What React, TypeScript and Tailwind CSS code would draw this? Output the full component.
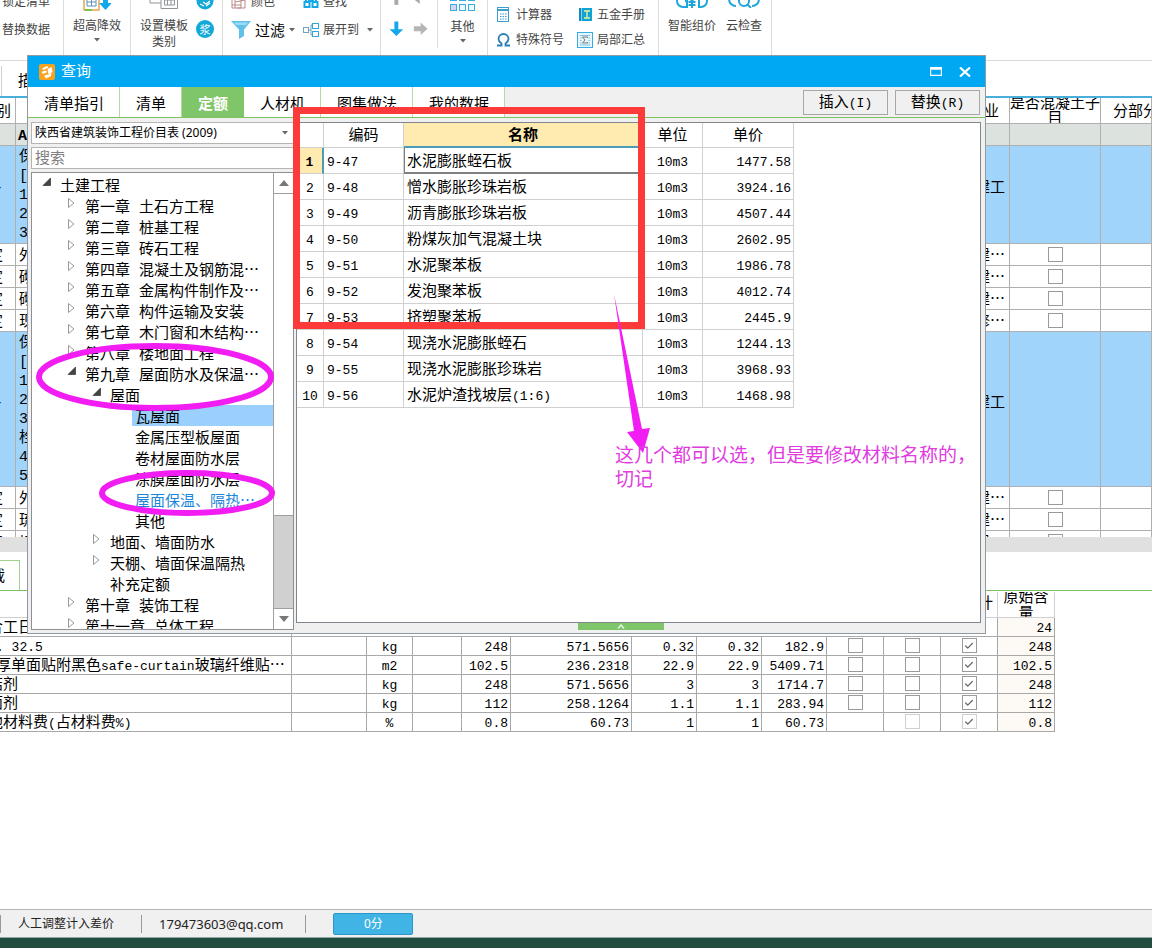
import React from 'react';
import { clsx } from 'clsx';
import { Check } from 'lucide-react';

const MONO = "font-['Liberation_Mono','Noto_Sans_CJK_SC',monospace]";
const SANS = "font-['Noto_Sans','Noto_Sans_CJK_SC',sans-serif]";

interface TreeNode {
  label: string;
  level: 0 | 1 | 2 | 3;
  state?: 'open' | 'closed';
  selected?: boolean;
  link?: boolean;
}

interface QuotaRow {
  code: string;
  name: string;
  suffix?: string;
  price: string;
}

interface MaterialRow {
  name: React.ReactNode;
  unit: string;
  values: string[];
  origin: string;
  locked?: boolean;
}

const tabs = ['清单指引', '清单', '定额', '人材机', '图集做法', '我的数据'];

const tree: TreeNode[] = [
  { label: '土建工程', level: 0, state: 'open' },
  { label: '第一章 土石方工程', level: 1, state: 'closed' },
  { label: '第二章 桩基工程', level: 1, state: 'closed' },
  { label: '第三章 砖石工程', level: 1, state: 'closed' },
  { label: '第四章 混凝土及钢筋混⋯', level: 1, state: 'closed' },
  { label: '第五章 金属构件制作及⋯', level: 1, state: 'closed' },
  { label: '第六章 构件运输及安装', level: 1, state: 'closed' },
  { label: '第七章 木门窗和木结构⋯', level: 1, state: 'closed' },
  { label: '第八章 楼地面工程', level: 1, state: 'closed' },
  { label: '第九章 屋面防水及保温⋯', level: 1, state: 'open' },
  { label: '屋面', level: 2, state: 'open' },
  { label: '瓦屋面', level: 3, selected: true },
  { label: '金属压型板屋面', level: 3 },
  { label: '卷材屋面防水层', level: 3 },
  { label: '涂膜屋面防水层', level: 3 },
  { label: '屋面保温、隔热⋯', level: 3, link: true },
  { label: '其他', level: 3 },
  { label: '地面、墙面防水', level: 2, state: 'closed' },
  { label: '天棚、墙面保温隔热', level: 2, state: 'closed' },
  { label: '补充定额', level: 2 },
  { label: '第十章 装饰工程', level: 1, state: 'closed' },
  { label: '第十一章 总体工程', level: 1, state: 'closed' },
];

const quotas: QuotaRow[] = [
  { code: '9-47', name: '水泥膨胀蛭石板', price: '1477.58' },
  { code: '9-48', name: '憎水膨胀珍珠岩板', price: '3924.16' },
  { code: '9-49', name: '沥青膨胀珍珠岩板', price: '4507.44' },
  { code: '9-50', name: '粉煤灰加气混凝土块', price: '2602.95' },
  { code: '9-51', name: '水泥聚苯板', price: '1986.78' },
  { code: '9-52', name: '发泡聚苯板', price: '4012.74' },
  { code: '9-53', name: '挤塑聚苯板', price: '2445.9' },
  { code: '9-54', name: '现浇水泥膨胀蛭石', price: '1244.13' },
  { code: '9-55', name: '现浇水泥膨胀珍珠岩', price: '3968.93' },
  { code: '9-56', name: '水泥炉渣找坡层', suffix: '(1:6)', price: '1468.98' },
];

const materials: MaterialRow[] = [
  {
    name: <span className="ml-2 text-[13px]">. 32.5</span>,
    unit: 'kg',
    values: ['248', '571.5656', '0.32', '0.32', '182.9'],
    origin: '248',
  },
  {
    name: <span className="ml-2">厚单面贴附黑色<span className="text-[13px]">safe-curtain</span>玻璃纤维贴⋯</span>,
    unit: 'm2',
    values: ['102.5', '236.2318', '22.9', '22.9', '5409.71'],
    origin: '102.5',
  },
  { name: '结剂', unit: 'kg', values: ['248', '571.5656', '3', '3', '1714.7'], origin: '248' },
  { name: '面剂', unit: 'kg', values: ['112', '258.1264', '1.1', '1.1', '283.94'], origin: '112' },
  {
    name: <>他材料费<span className="text-[13px]">(</span>占材料费<span className="text-[13px]">%)</span></>,
    unit: '%',
    values: ['0.8', '60.73', '1', '1', '60.73'],
    origin: '0.8',
    locked: true,
  },
];

function Caret({ className }: { className?: string }) {
  return (
    <svg viewBox="0 0 6 4" className={clsx('h-1 w-1.5 shrink-0', className)}>
      <path d="M0 0h6L3 3.6z" fill="#666" />
    </svg>
  );
}

function CheckBox({ label, checked = false, faded = false }: { label: string; checked?: boolean; faded?: boolean }) {
  return (
    <span className="inline-grid size-[15px] place-items-center align-middle">
      <input
        type="checkbox"
        aria-label={label}
        defaultChecked={checked}
        className={clsx(
          'col-start-1 row-start-1 size-[15px] appearance-none border bg-white',
          faded ? 'border-[#d0d0d0]' : 'border-[#9a9a9a]',
        )}
      />
      {checked && <Check className="pointer-events-none col-start-1 row-start-1 size-2.5 text-[#666]" strokeWidth={3} />}
    </span>
  );
}

function RibbonButton({ icon, children }: { icon?: React.ReactNode; children: React.ReactNode }) {
  return (
    <button type="button" className="flex h-4 items-center gap-1 whitespace-nowrap">
      {icon}
      {children}
    </button>
  );
}

function Ribbon() {
  return (
    <header className={`flex h-[61px] shrink-0 items-stretch overflow-hidden border-b border-[#d9d9d9] bg-white text-[12px] leading-4 text-[#444] ${SANS}`}>
      <div className="flex w-16 shrink-0 flex-col justify-end gap-3 border-r border-[#dcdcdc] pb-[22px] pl-0.5">
        <RibbonButton>锁定清单</RibbonButton>
        <RibbonButton>替换数据</RibbonButton>
      </div>

      <div className="flex w-[67px] shrink-0 flex-col justify-end border-r border-[#dcdcdc] pb-[18px]">
        <button type="button" className="flex flex-col items-center">
          <svg viewBox="0 0 28 20" className="mb-1.5 h-5 w-7" fill="none">
            <path d="M1 0v18h15V0" stroke="#e9a64a" strokeWidth="1.5" />
            <path d="M4 0v14h9V0M4 5h9M4 10h9M8.500 0v14" stroke="#5f93b8" />
            <path d="M2 18h7" stroke="#7dc242" strokeWidth="2" />
            <path d="M20 0h5v11h4l-6.500 7-6.500-7h4z" fill="#12a8ea" />
          </svg>
          <span>超高降效</span>
          <Caret className="mt-1" />
        </button>
      </div>

      <div className="flex w-[92px] shrink-0 items-end justify-between border-r border-[#dcdcdc] pb-2.5 pr-2 pl-[9px]">
        <button type="button" className="flex flex-col items-center">
          <svg viewBox="0 0 30 20" className="mb-2 h-5 w-[30px]" fill="none" stroke="#8f9499">
            <path d="M12 13H1V0M12 0v18.500h16.500V0M15.500 0v15h10V0M15.500 5h10M15.500 10h10M18.500 0v15M22 0v15" />
          </svg>
          <span>设置模板</span>
          <span>类别</span>
        </button>
        <div className="flex flex-col gap-2.5 pb-3">
          <svg viewBox="0 0 18 18" className="size-[18px]">
            <circle cx="9" cy="9" r="8.500" fill="#12a8d8" />
            <path d="M4 12l4 2M7 10l3 2 4-3M10 14l4-3" stroke="#fff" strokeWidth="1.300" fill="none" />
          </svg>
          <button type="button" className="grid size-[18px] place-items-center rounded-full bg-[#12a8d8] text-[11px] leading-none text-white">
            浆
          </button>
        </div>
      </div>

      <div className="flex w-[158px] shrink-0 flex-col justify-end gap-3 border-r border-[#dcdcdc] pb-[22px] pl-2">
        <div className="flex items-center">
          <div className="w-[72px]">
            <RibbonButton
              icon={
                <svg viewBox="0 0 16 16" className="size-4" fill="none" stroke="#b98a8a">
                  <path d="M1 5h9v9H1zM4 8l10-2v8H6M1 11h9M4 14V5" />
                </svg>
              }
            >
              颜色
            </RibbonButton>
          </div>
          <RibbonButton
            icon={
              <svg viewBox="0 0 16 16" className="size-4" fill="none" stroke="#12a8ea" strokeWidth="2">
                <path d="M3 8V3h3v5M10 8V3h3v5M6 7h4" />
                <rect x="1.500" y="8" width="5" height="5" />
                <rect x="9.500" y="8" width="5" height="5" />
              </svg>
            }
          >
            查找
          </RibbonButton>
        </div>
        <div className="flex items-center">
          <button type="button" className="flex h-4 w-[72px] items-center gap-1 text-[15px] text-black">
            <svg viewBox="0 0 20 18" className="h-[18px] w-5 shrink-0">
              <path d="M0 0h20l-7 8.500V15l-5 3V8.500z" fill="#5fc0ea" />
              <path d="M3 1.500h14l-2 2.500H5z" fill="#9bdcf6" />
            </svg>
            <span className="whitespace-nowrap">过滤</span>
            <Caret />
          </button>
          <button type="button" className="flex h-4 items-center gap-1 whitespace-nowrap">
            <svg viewBox="0 0 16 16" className="size-4" fill="#fff" stroke="#6fa3bf">
              <path d="M5 8h3M8 3v10M8 3h2M8 13h2" fill="none" />
              <rect x=".5" y="5.500" width="5" height="5" />
              <rect x="9.500" y="1.500" width="6" height="5" stroke="#2fa8dc" />
              <rect x="9.500" y="9.500" width="6" height="5" stroke="#2fa8dc" />
            </svg>
            展开到
            <Caret className="ml-1" />
          </button>
        </div>
      </div>

      <div className="mb-3 flex w-[57px] shrink-0 flex-col justify-end border-r border-[#dcdcdc] pb-3 pl-2">
        <svg viewBox="0 0 40 37" className="h-[37px] w-10">
          <path d="M5 0h4v5H5z" fill="#a9a9a9" />
          <path d="M26 0h5v4z" fill="#a9a9a9" />
          <path d="M5 22h4v8h5l-7 7-7-7h5z" fill="#12a8ea" />
          <path d="M25 27h7v-4l7 6.500-7 6.500v-4h-7z" fill="#b5b5b5" />
        </svg>
      </div>

      <div className="flex w-[50px] shrink-0 flex-col justify-end border-r border-[#dcdcdc] pb-[17px]">
        <button type="button" className="flex flex-col items-center">
          <svg viewBox="0 0 26 16" className="mb-2 h-4 w-[26px]" fill="#eef8fd" stroke="#35aee3">
            <rect x=".5" y=".5" width="6" height="5" />
            <rect x="9.500" y=".5" width="6" height="5" />
            <rect x="18.500" y=".5" width="6" height="5" />
            <rect x=".5" y="9.500" width="6" height="6" fill="#d9d2f3" />
            <rect x="9.500" y="9.500" width="6" height="6" />
            <rect x="18.500" y="9.500" width="6" height="6" />
          </svg>
          <span>其他</span>
          <Caret className="mt-1" />
        </button>
      </div>

      <div className="grid w-[171px] shrink-0 grid-cols-[81px_1fr] content-end gap-y-[9px] border-r border-[#dcdcdc] pb-3 pl-2">
        <RibbonButton
          icon={
            <svg viewBox="0 0 16 16" className="size-4" fill="none" stroke="#3a9fd0">
              <rect x="1.500" y=".5" width="11" height="14" fill="#fff" />
              <path d="M1.500 3h11" strokeWidth="2" />
              <path d="M4 7h1.500M6.500 7H8M9 7h1.500M4 9.500h1.500M6.500 9.500H8M9 9.500h1.500M4 12h1.500M6.500 12H8M9 12h1.500" />
            </svg>
          }
        >
          计算器
        </RibbonButton>
        <RibbonButton
          icon={
            <svg viewBox="0 0 16 16" className="size-4">
              <path d="M2 1h2v13H2z" fill="#1189c4" />
              <path d="M4.500 1H15v13H4.500z" fill="#10a3d4" />
              <path d="M7 4h6M10 4v7M7 11h6" stroke="#e9f59c" strokeWidth="1.300" />
            </svg>
          }
        >
          五金手册
        </RibbonButton>
        <RibbonButton
          icon={
            <svg viewBox="0 0 16 16" className="size-4" fill="none" stroke="#2a7fb8" strokeWidth="1.800">
              <path d="M1 13.500h4.500v-2C3.500 10 2.500 8.500 2.500 7a5 5 0 0 1 10 0c0 1.500-1 3-3 4.500v2H14" />
            </svg>
          }
        >
          特殊符号
        </RibbonButton>
        <RibbonButton
          icon={
            <svg viewBox="0 0 16 16" className="size-4" fill="none">
              <rect x=".5" y=".5" width="15" height="15" fill="#e8f6fc" stroke="#35aee3" />
              <path d="M3 3.500h10M3 6h1.500M11.500 6H13M3 8.500h1.500M11.500 8.500H13M3 11h1.500M11.500 11H13M3 13h10" stroke="#7cc3e4" />
              <path d="M10.500 6V5h-5l2.500 3-2.500 3h5v-1" stroke="#777" />
            </svg>
          }
        >
          局部汇总
        </RibbonButton>
      </div>

      <div className="flex w-[113px] shrink-0 items-end gap-2.5 border-r border-[#dcdcdc] pb-[26px] pl-[9px] whitespace-nowrap">
        <button type="button" className="flex flex-col items-center">
          <svg viewBox="0 0 32 16" className="mb-2.5 h-4 w-8" fill="none" stroke="#1fa6dc" strokeWidth="2">
            <path d="M9 9h2v6H7a6 6 0 0 1-6-6V3M23 2v13h2a6 6 0 0 0 6-6V3M13 5l3 4 3-4M16 9v7M12.500 10h7M12.500 13h7" />
          </svg>
          <span>智能组价</span>
        </button>
        <button type="button" className="flex flex-col items-center">
          <svg viewBox="0 0 32 16" className="mb-2.5 h-4 w-8" fill="none" stroke="#1fa6dc" strokeWidth="2">
            <path d="M8 14C4 14 1 11 1 7M24 14c4 0 7-3 7-7M19 12l4 4" />
            <circle cx="16" cy="9" r="5" />
          </svg>
          <span>云检查</span>
        </button>
      </div>
    </header>
  );
}

const bgCell = 'overflow-hidden border-r border-b border-[#b0b0b0] p-0 whitespace-nowrap';

// tail of a value whose column starts left of the window
function Tail({ children }: { children: React.ReactNode }) {
  return <div className="flex w-[15px] justify-end pr-3">{children}</div>;
}

function ItemRow({ first, tail }: { first: string; tail: React.ReactNode }) {
  return (
    <tr className="h-[22px]">
      <td className={clsx(bgCell, 'pt-1')}><Tail>定</Tail></td>
      <td className={clsx(bgCell, 'pt-1 pl-[3px]')}>{first}</td>
      <td className={clsx(bgCell, 'pt-1 pr-1 text-right')}>{tail}</td>
      <td className={clsx(bgCell, 'text-center leading-none')}><CheckBox label="是否混凝土子目" /></td>
      <td className={bgCell} />
    </tr>
  );
}

function GroupRow({ lines, height }: { lines: string[]; height: string }) {
  return (
    <tr className={clsx('bg-[#a0d4fb]', height)}>
      <td className={clsx(bgCell, 'pb-3')}><Tail>-</Tail></td>
      <td className={clsx(bgCell, 'pt-0.5 pl-[3px] leading-[19px]')}>
        {lines.map((line) => (
          <div key={line}>{line}</div>
        ))}
      </td>
      <td className={clsx(bgCell, 'pr-1 pb-3 text-right')}>建工</td>
      <td className={bgCell} />
      <td className={bgCell} />
    </tr>
  );
}

function BillTable() {
  return (
    <div className="h-[439px] shrink-0 overflow-hidden">
      <table className="w-full table-fixed border-separate border-spacing-0 text-[15px] leading-[15px]">
        <colgroup>
          <col className="w-4" />
          <col />
          <col className="w-11" />
          <col className="w-[91px]" />
          <col className="w-[51px]" />
        </colgroup>
        <thead>
          <tr className="h-[26px] text-left">
            <th className={clsx(bgCell, 'pt-1 font-normal')}><div className="flex w-[15px] justify-end pr-1">别</div></th>
            <th className={bgCell} />
            <th className={clsx(bgCell, 'pt-1 pr-2.5 text-right font-normal')}>专业</th>
            <th className="overflow-hidden border-r border-b border-[#b0b0b0] p-0 font-normal">
              <div className="flex h-[25px] items-center pt-0.5 text-center">是否混凝土子目</div>
            </th>
            <th className={clsx(bgCell, 'pt-1 pl-3 font-normal')}>分部分项</th>
          </tr>
        </thead>
        <tbody>
          <tr className="h-[22px] bg-[#dce3df]">
            <td className={bgCell} />
            <td className={clsx(bgCell, 'pt-[3px] pl-[2px] font-bold')}>A.1</td>
            <td className={bgCell} />
            <td className={bgCell} />
            <td className={bgCell} />
          </tr>
          <GroupRow height="h-[98px]" lines={['保温隔热屋面', '[项目特征]', '1', '2', '3']} />
          <ItemRow first="外" tail="建⋯" />
          <ItemRow first="砌" tail="建⋯" />
          <ItemRow first="砌" tail="建⋯" />
          <ItemRow first="现" tail="修⋯" />
          <GroupRow height="h-[155px]" lines={['保温隔热屋面', '[项目特征]', '1', '2', '3', '栓', '4', '5']} />
          <ItemRow first="外" tail="建⋯" />
          <ItemRow first="琉" tail="建⋯" />
          <ItemRow first="切" tail="建⋯" />
        </tbody>
      </table>
    </div>
  );
}

const matCell = 'overflow-hidden border-r border-b border-[#a8a8a8] px-0 pt-[3px] pb-0 whitespace-nowrap';
const matCheckCell = 'border-r border-b border-[#a8a8a8] p-0 text-center leading-none';

function MaterialTable() {
  return (
    <table className="w-[1055px] table-fixed border-separate border-spacing-0 text-[15px] leading-[15px]">
      <colgroup>
        <col className="w-[292px]" />
        <col className="w-[75px]" />
        <col className="w-[46px]" />
        <col className="w-[49px]" />
        <col className="w-[49px]" />
        <col className="w-[121px]" />
        <col className="w-[65px]" />
        <col className="w-[65px]" />
        <col className="w-[65px]" />
        <col className="w-[57px]" />
        <col className="w-[57px]" />
        <col className="w-[57px]" />
        <col className="w-[57px]" />
      </colgroup>
      <thead>
        <tr className="h-[26px]">
          <th colSpan={11} className="border-b border-[#d0d0d0] p-0" />
          <th className="border-r border-b border-[#d0d0d0] p-0 pr-1 text-right font-normal">计</th>
          <th className="border-r border-b border-[#d0d0d0] p-0 font-normal">
            <div className="flex h-[25px] items-center justify-center overflow-hidden px-1 pt-1 leading-4">原始含量</div>
          </th>
        </tr>
      </thead>
      <tbody>
        <tr className="h-[19px]">
          <td className={matCell}><div className="-ml-3">合工日</div></td>
          <td colSpan={11} className={matCell} />
          <td className={clsx(matCell, 'bg-[#fdfaf5] pr-0.5 text-right text-[13px]')}>24</td>
        </tr>
        {materials.map((row, i) => (
          <tr key={i} className="h-[19px]">
            <td className={matCell}><div className="-ml-3">{row.name}</div></td>
            <td className={matCell} />
            <td className={clsx(matCell, 'text-center text-[13px]')}>{row.unit}</td>
            <td className={matCell} />
            {row.values.map((value, j) => (
              <td key={j} className={clsx(matCell, 'pr-0.5 text-right text-[13px]')}>{value}</td>
            ))}
            <td className={matCheckCell}>{!row.locked && <CheckBox label="暂估" />}</td>
            <td className={matCheckCell}><CheckBox label="锁定" faded={row.locked} /></td>
            <td className={matCheckCell}><CheckBox label="合计" checked faded={row.locked} /></td>
            <td className={clsx(matCell, 'bg-[#fdfaf5] pr-0.5 text-right text-[13px]')}>{row.origin}</td>
          </tr>
        ))}
      </tbody>
    </table>
  );
}

function StatusBar() {
  return (
    <footer className={`flex h-7 shrink-0 items-center border-t border-[#b4b4b4] bg-[#f0f0f0] text-[12px] leading-4 text-[#222] ${SANS}`}>
      <span className="border-l border-[#999] py-px pr-[27px] pl-[17px]">人工调整计入差价</span>
      <span className="border-x border-[#999] py-px pr-[22px] pl-[17px] text-[13px]">179473603@qq.com</span>
      <button type="button" className="ml-[27px] h-[22px] w-20 rounded-xs border border-[#2c96c9] bg-[#40b4e5] text-white">
        0分
      </button>
    </footer>
  );
}

function Expander({ state }: { state?: 'open' | 'closed' }) {
  return (
    <span className="mr-[9px] w-2.5 shrink-0 pt-[3px] pl-px">
      {state && (
        <svg viewBox="0 0 9 10" className="h-2.5 w-[9px]">
          {state === 'open' ? (
            <path d="M8.500 1v7.500H1z" fill="#444" stroke="#222" strokeWidth=".6" />
          ) : (
            <path d="M1.500.5v9l5.500-4.500z" fill="#fff" stroke="#999" />
          )}
        </svg>
      )}
    </span>
  );
}

const indent = ['pl-[9px]', 'pl-[34px]', 'pl-[59px]', 'pl-[84px]'];

function ChapterTree() {
  return (
    <div className="flex min-h-0 flex-1 border border-[#8c9196] bg-white">
      <ul className="flex-1 overflow-hidden pt-px text-[15px] leading-[21px]">
        {tree.map((node) => (
          <li key={node.label} className={clsx('flex h-[21px] items-start whitespace-nowrap', indent[node.level])}>
            {node.level < 3 && <Expander state={node.state} />}
            <span
              className={clsx(
                'h-[21px] pt-[3px]',
                node.level === 3 && 'ml-4 flex-1 pl-[3px]',
                node.selected && 'bg-[#9ad0fb]',
                node.link && 'text-[#1c86dd]',
              )}
            >
              {node.label}
            </span>
          </li>
        ))}
      </ul>
      <div className="flex w-5 flex-col border-l border-[#a0a0a0]">
        <button type="button" aria-label="向上" className="grid h-[21px] place-items-center border-b border-[#a0a0a0]">
          <svg viewBox="0 0 10 6" className="h-1.5 w-2.5"><path d="M0 6h10L5 0z" fill="#777" /></svg>
        </button>
        <div className="flex-[323] border-b border-[#a0a0a0]" />
        <div className="flex-[92] bg-[#d0d0d0]" />
        <button type="button" aria-label="向下" className="grid h-[21px] place-items-center border-t border-[#a0a0a0]">
          <svg viewBox="0 0 10 6" className="h-1.5 w-2.5"><path d="M0 0h10L5 6z" fill="#777" /></svg>
        </button>
      </div>
    </div>
  );
}

const quotaCell = 'border-r border-b border-[#d0d0d0] px-0 pt-1 pb-0';

function QuotaTable() {
  return (
    <table className="w-[497px] table-fixed border-separate border-spacing-0 text-[15px] leading-4">
      <colgroup>
        <col className="w-[27px]" />
        <col className="w-20" />
        <col className="w-[239px]" />
        <col className="w-[60px]" />
        <col className="w-[91px]" />
      </colgroup>
      <thead>
        <tr className="h-[25px]">
          <th className={quotaCell} />
          <th className={clsx(quotaCell, 'font-normal')}>编码</th>
          <th className="border-r border-b-2 border-r-[#d0d0d0] border-b-[#4a9cb8] bg-[#ffebb0] px-0 pt-[5px] pb-0 font-bold">名称</th>
          <th className={clsx(quotaCell, 'font-normal')}>单位</th>
          <th className={clsx(quotaCell, 'font-normal')}>单价</th>
        </tr>
      </thead>
      <tbody>
        {quotas.map((row, i) => (
          <tr key={row.code} className="h-[26px]">
            <td
              className={clsx(
                'border-b px-0 pt-1 pb-0 text-center text-[13px]',
                i === 0
                  ? 'border-r-2 border-r-[#4a9cb8] border-b-[#d0d0d0] bg-[#ffebb0] font-bold'
                  : 'border-r border-[#d0d0d0]',
              )}
            >
              {i + 1}
            </td>
            <td className={clsx(quotaCell, 'pl-[3px] text-[13px]')}>{row.code}</td>
            <td
              className={clsx(
                'pb-0',
                i === 0
                  ? 'border-r border-b-2 border-l border-[#808080] pt-1.5 pl-0.5'
                  : 'border-r border-b border-[#d0d0d0] pt-[5px] pl-[3px]',
              )}
            >
              {row.name}
              {row.suffix && <span className="text-[13px]">{row.suffix}</span>}
            </td>
            <td className={clsx(quotaCell, 'text-center text-[13px]')}>10m3</td>
            <td className={clsx(quotaCell, 'pr-0.5 text-right text-[13px]')}>{row.price}</td>
          </tr>
        ))}
      </tbody>
    </table>
  );
}

function QueryDialog() {
  return (
    <section
      role="dialog"
      aria-label="查询"
      className="absolute top-[55px] left-[27px] flex h-[579px] w-[959px] flex-col border border-[#909aa0] bg-[#f0f0f0]"
    >
      <div className="flex h-[31px] shrink-0 items-center bg-[#00a8f3] pr-3.5 pl-[11px] text-[15px] text-white">
        <svg viewBox="0 0 16 16" className="mr-1.5 size-4">
          <rect width="16" height="16" rx="2" fill="#f7a21b" />
          <path d="M3 4.500l5-2.500 1.500 1.500L4.500 6zM8.500 5l4-2 1 5-4 2.500zM2.500 8l4-1.500 2 1.500-4.500 2zM5 12l3-1.500 1 .5 3.500-2-.5 3-5 2.500z" fill="#fff" />
        </svg>
        <h1 className="flex-1 pt-1">查询</h1>
        <button type="button" aria-label="最大化" className="mr-[17px]">
          <svg viewBox="0 0 12 9" className="h-[9px] w-3"><path d="M.5.5h11v8H.5zM.5 2h11" fill="none" stroke="#fff" strokeWidth="1.400" /></svg>
        </button>
        <button type="button" aria-label="关闭">
          <svg viewBox="0 0 12 10" className="h-2.5 w-3"><path d="M1 .5l10 9M11 .5l-10 9" stroke="#fff" strokeWidth="2.200" /></svg>
        </button>
      </div>

      <nav className="flex h-[31px] shrink-0 items-stretch border-b border-[#7dc25f] text-[15px]">
        {tabs.map((tab) => (
          <button
            key={tab}
            type="button"
            className={clsx(
              'px-4 pt-2',
              tab === '定额' ? 'bg-[#7fc56a] font-bold text-white' : 'bg-white shadow-[inset_-1px_0_#b5dba5]',
            )}
          >
            {tab}
          </button>
        ))}
        <div className="flex flex-1 items-center justify-end gap-[7px] pr-[5px]">
          <button type="button" className="h-[25px] w-[85px] border border-[#a8a8a8] pt-1 leading-4">插入<span className="text-[13px]">(I)</span></button>
          <button type="button" className="h-[25px] w-[85px] border border-[#a8a8a8] pt-1 leading-4">替换<span className="text-[13px]">(R)</span></button>
        </div>
      </nav>

      <div className="flex min-h-0 flex-1 gap-0.5 pt-1 pr-1 pb-[3px] pl-[3px]">
        <div className="flex w-[263px] shrink-0 flex-col gap-[3px]">
          <div className="grid items-center">
            <select
              aria-label="定额库"
              className={`col-start-1 row-start-1 h-[22px] appearance-none border border-[#b4b4b4] bg-white pl-[3px] text-[12px] leading-4 ${SANS}`}
            >
              <option>陕西省建筑装饰工程价目表 (2009)</option>
            </select>
            <Caret className="pointer-events-none col-start-1 row-start-1 mr-1.5 justify-self-end" />
          </div>
          <input
            type="text"
            aria-label="搜索"
            placeholder="搜索"
            className="h-[22px] border border-[#b4b4b4] bg-white pt-0.5 pl-[3px] text-[15px] leading-[18px] placeholder:text-[#808080]"
          />
          <ChapterTree />
        </div>
        <div className="flex min-w-0 flex-1 flex-col items-center">
          <div className="min-h-0 w-full flex-1 border border-[#80868c] bg-white">
            <QuotaTable />
          </div>
          <button type="button" aria-label="收起" className="mr-9 grid h-[7px] w-[86px] place-items-center bg-[#7fc56a]">
            <svg viewBox="0 0 8 6" className="h-1.5 w-2"><path d="M1 4.500L4 1l3 3.500" fill="none" stroke="#e4f5dc" strokeWidth="1.500" /></svg>
          </button>
        </div>
      </div>
    </section>
  );
}

function Markup() {
  return (
    <>
      <svg viewBox="0 0 700 540" className="pointer-events-none absolute top-0 left-0 h-[540px] w-[700px]" fill="none">
        <rect x="296.500" y="110.500" width="345" height="215" stroke="#fc3a3a" strokeWidth="7" />
        <ellipse cx="155" cy="377" rx="116" ry="31" stroke="#f21df2" strokeWidth="6" />
        <ellipse cx="187" cy="493" rx="85" ry="20" stroke="#f21df2" strokeWidth="6" />
        <path d="M614 294l28 135 8-1-7 25-16-21 7-1z" fill="#f21df2" />
      </svg>
      <p className="absolute top-[445px] left-[615px] w-[365px] text-[19px] leading-6 text-[#e03ce0]">
        这几个都可以选，但是要修改材料名称的，切记
      </p>
    </>
  );
}

export default function App() {
  return (
    <div className={`relative flex min-h-screen flex-col overflow-hidden bg-white text-black ${MONO}`}>
      <Ribbon />
      <div className="flex h-[37px] shrink-0 items-end border-b-2 border-[#4aaedb] text-[15px]">
        <span className="ml-px border-l border-[#d0d0d0] pt-1.5 pb-0.5 pl-4">描述</span>
      </div>
      <BillTable />
      <div className="h-[15px] shrink-0 bg-[#e0e0e0]" />
      <div className="mt-2 mb-px flex h-[31px] shrink-0 border-b border-[#7dc25f] text-[15px]">
        <div className="flex w-5 items-center justify-end border-t border-r border-[#9fd38c] pt-1.5 pr-3.5">
          <span>载</span>
        </div>
      </div>
      <MaterialTable />
      <div className="flex-1" />
      <StatusBar />
      <div className="h-[11px] shrink-0 border-t border-[#8fa8a0] bg-[#234d40]" />
      <QueryDialog />
      <Markup />
    </div>
  );
}
